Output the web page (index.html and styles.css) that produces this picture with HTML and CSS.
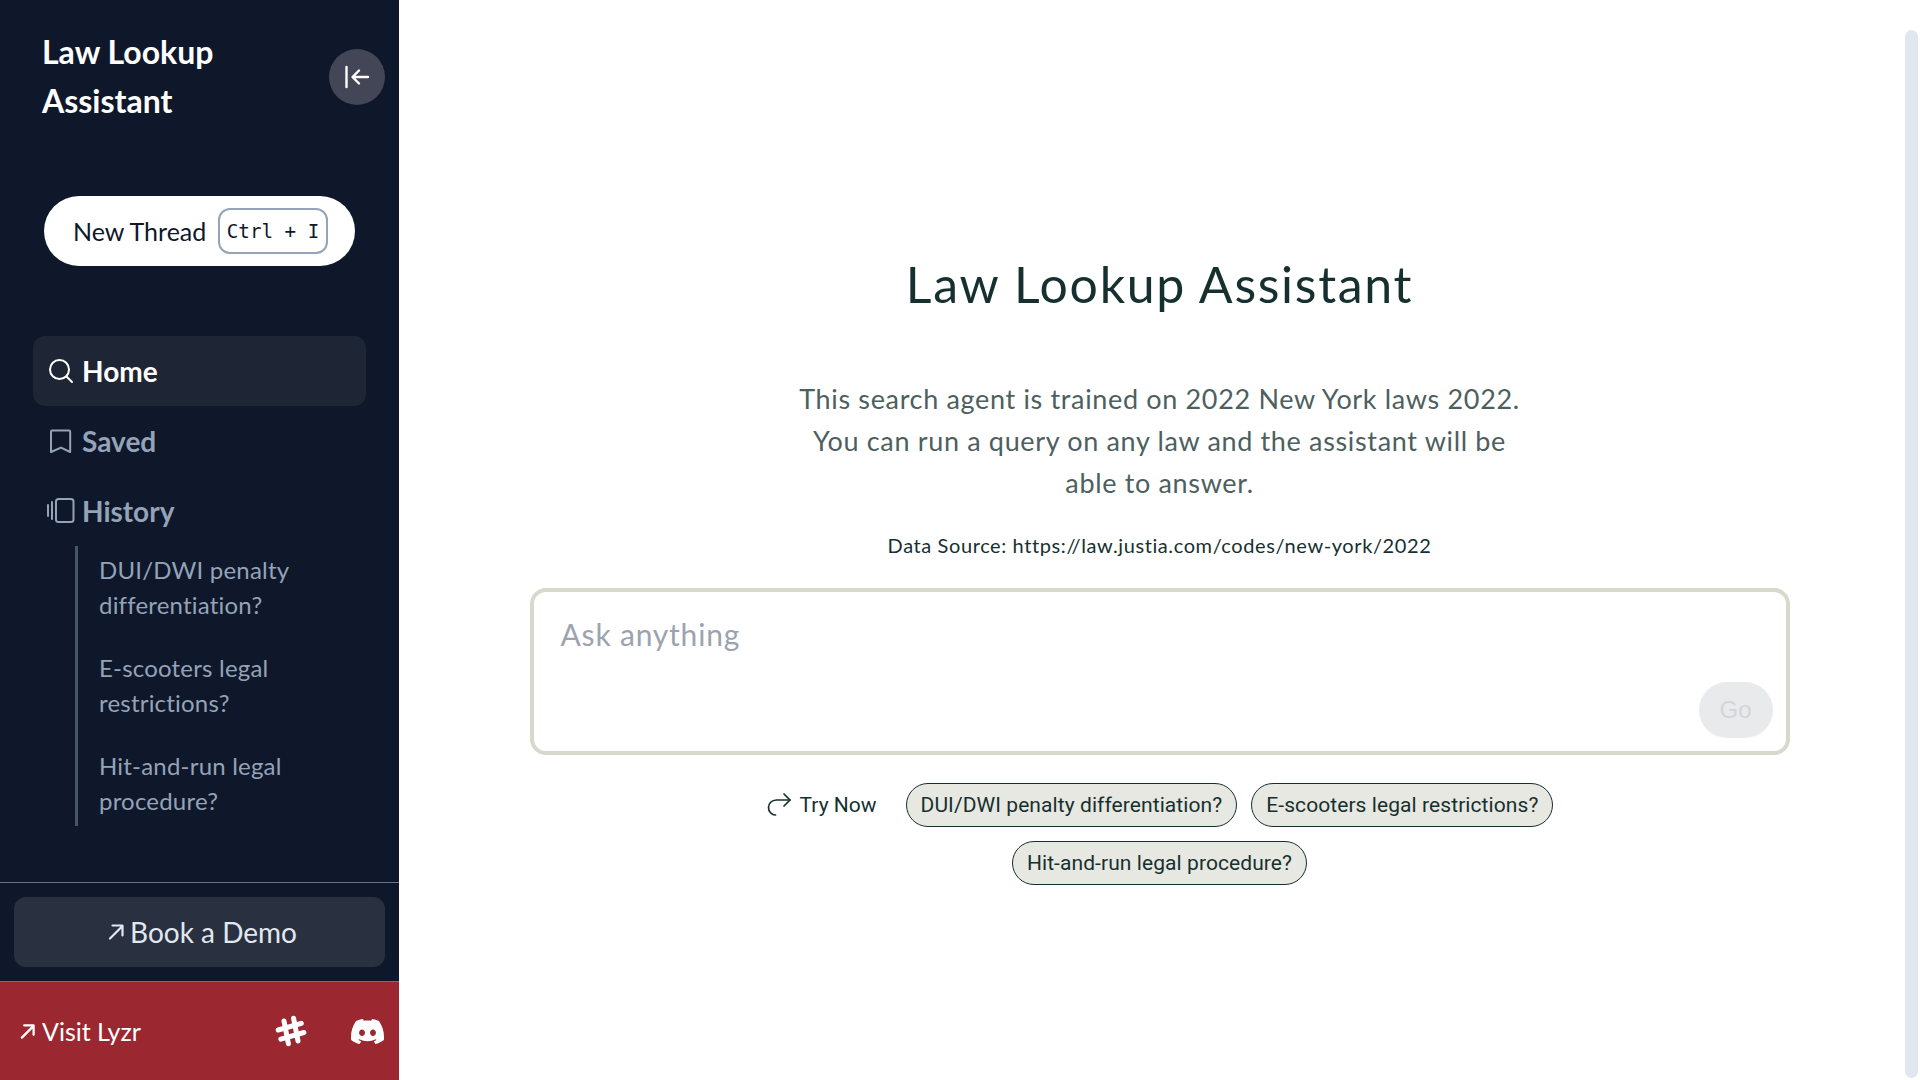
FILE: index.html
```html
<!DOCTYPE html>
<html lang="en">
<head>
<meta charset="utf-8">
<title>Law Lookup Assistant</title>
<link rel="stylesheet" href="styles.css">
</head>
<body>
<div class="app">
  <aside class="sidebar">
    <div class="brand">
      <div class="brand-title">Law Lookup Assistant</div>
      <button class="collapse"><svg width="28" height="28" viewBox="0 0 28 28" fill="none" stroke="#fff" stroke-width="2.400" stroke-linecap="round" stroke-linejoin="round"><path d="M3.500 4v20M25 14H10M16 7.500 9.500 14l6.500 6.500"/></svg></button>
    </div>
    <div class="new-row">
      <button class="new-thread"><span>New Thread</span><kbd class="kbd">Ctrl + I</kbd></button>
    </div>
    <nav class="nav">
      <div class="nav-item active"><span class="nav-icon"><svg width="26" height="26" viewBox="0 0 26 26" fill="none" stroke="currentColor" stroke-width="2" stroke-linecap="round"><circle cx="11.500" cy="11.500" r="9.500"/><path d="M18.500 18.500 24 24"/></svg></span>Home</div>
      <div class="nav-item"><span class="nav-icon"><svg width="26" height="26" viewBox="0 0 26 26" fill="none" stroke="currentColor" stroke-width="2" stroke-linejoin="round"><path d="M4 2.500h17c.8 0 1.200.4 1.200 1.200V24L13 19.600 3 24V3.700c0-.8.2-1.200 1-1.200z"/></svg></span>Saved</div>
      <div class="nav-item"><span class="nav-icon"><svg width="30" height="28" viewBox="0 0 30 28" fill="none" stroke="currentColor" stroke-width="2" stroke-linecap="round" stroke-linejoin="round"><rect x="10" y="2" width="17.500" height="23" rx="2.500"/><path d="M2 8v11M6 5v17"/></svg></span>History</div>
      <div class="history">
        <a class="history-item">DUI/DWI penalty differentiation?</a>
        <a class="history-item">E-scooters legal restrictions?</a>
        <a class="history-item">Hit-and-run legal procedure?</a>
      </div>
    </nav>
    <div class="demo-wrap">
      <button class="demo"><svg width="16" height="16" viewBox="0 0 16 16" fill="none" stroke="currentColor" stroke-width="2.200" stroke-linecap="round" stroke-linejoin="round"><path d="M2 14.500 14.500 2M4.500 1.500h10v10"/></svg>Book a Demo</button>
    </div>
    <div class="visit">
      <a class="visit-link"><svg width="15" height="15" viewBox="0 0 16 16" fill="none" stroke="currentColor" stroke-width="2.400" stroke-linecap="round" stroke-linejoin="round"><path d="M2 14.500 14.500 2M4.500 1.500h10v10"/></svg>Visit Lyzr</a>
      <div class="socials">
        <svg class="slack" width="32" height="32" viewBox="0 0 32 32" fill="none" stroke="#fff" stroke-width="5" stroke-linecap="round"><path d="M12 4.500 10 27.500M22 4.500 20 27.500M4 11.500h24M4 21h24" transform="rotate(-16 16 16)"/></svg>
        <svg class="discord" width="33" height="33" viewBox="0 0 24 24" fill="#fff"><path d="M20.317 4.3698a19.7913 19.7913 0 00-4.8851-1.5152.0741.0741 0 00-.0785.0371c-.211.3753-.4447.8648-.6083 1.2495-1.8447-.2762-3.68-.2762-5.4868 0-.1636-.3933-.4058-.8742-.6177-1.2495a.077.077 0 00-.0785-.037 19.7363 19.7363 0 00-4.8852 1.515.0699.0699 0 00-.0321.0277C.5334 9.0458-.319 13.5799.0992 18.0578a.0824.0824 0 00.0312.0561c2.0528 1.5076 4.0413 2.4228 5.9929 3.0294a.0777.0777 0 00.0842-.0276c.4616-.6304.8731-1.2952 1.226-1.9942a.076.076 0 00-.0416-.1057c-.6528-.2476-1.2743-.5495-1.8722-.8923a.077.077 0 01-.0076-.1277c.1258-.0943.2517-.1923.3718-.2914a.0743.0743 0 01.0776-.0105c3.9278 1.7933 8.18 1.7933 12.0614 0a.0739.0739 0 01.0785.0095c.1202.099.246.1981.3728.2924a.077.077 0 01-.0066.1276 12.2986 12.2986 0 01-1.8732.8914.0766.0766 0 00-.0407.1067c.3604.698.7719 1.3628 1.225 1.9932a.076.076 0 00.0842.0286c1.961-.6067 3.9495-1.5219 6.0023-3.0294a.077.077 0 00.0313-.0552c.5004-5.177-.8382-9.6739-3.5485-13.6604a.061.061 0 00-.0312-.0286zM8.02 15.3312c-1.1825 0-2.1569-1.0857-2.1569-2.419 0-1.3332.9555-2.4189 2.157-2.4189 1.2108 0 2.1757 1.0952 2.1568 2.419 0 1.3332-.9555 2.4189-2.1569 2.4189zm7.9748 0c-1.1825 0-2.1569-1.0857-2.1569-2.419 0-1.3332.9554-2.4189 2.1569-2.4189 1.2108 0 2.1757 1.0952 2.1568 2.419 0 1.3332-.946 2.4189-2.1568 2.4189Z"/></svg>
      </div>
    </div>
  </aside>
  <main class="main">
    <h1 class="heading">Law Lookup Assistant</h1>
    <p class="intro">This search agent is trained on 2022 New York laws 2022. You can run a query on any law and the assistant will be able to answer.</p>
    <p class="source">Data Source: https://law.justia.com/codes/new-york/2022</p>
    <div class="ask">
      <span class="placeholder">Ask anything</span>
      <button class="go">Go</button>
    </div>
    <div class="suggest">
      <span class="try"><svg width="26" height="26" viewBox="0 0 26 26" fill="none" stroke="#16302f" stroke-width="1.700" stroke-linecap="round" stroke-linejoin="round"><path d="M24 8H10.500C5.500 8 2.500 11.500 2.500 15.500S5.500 23 9.500 23"/><path d="M18 2l6 6-6 6"/></svg>Try Now</span>
      <button class="chip">DUI/DWI penalty differentiation?</button>
      <button class="chip">E-scooters legal restrictions?</button>
      <button class="chip">Hit-and-run legal procedure?</button>
    </div>
  </main>
  <div class="scroll-thumb"></div>
</div>
</body>
</html>
```
FILE: styles.css
```css
* { box-sizing: border-box; }
html, body { margin: 0; height: 100%; }
body { background: #fff; font-family: "Lato", "Noto Sans", sans-serif; overflow: hidden; }
button { font-family: inherit; border: 0; cursor: pointer; }
.app { display: flex; height: 1080px; position: relative; }

.sidebar { width: 399px; flex: none; background: #0f172a; display: flex; flex-direction: column; }
.brand { display: flex; justify-content: space-between; align-items: center; height: 153px; padding: 0 14px 1px 42px; }
.brand-title { width: 210px; color: #fff; font-size: 32px; line-height: 49px; font-weight: 700; }
.collapse { width: 56px; height: 56px; margin-top: 2px; border-radius: 50%; background: #424656; display: flex; align-items: center; justify-content: center; padding: 0; }
.new-row { padding: 43px 44px 0; }
.new-thread { width: 311px; height: 70px; border-radius: 35px; background: #fff; color: #0f172a; display: flex; align-items: center; padding: 0 27px 0 29px; justify-content: space-between; font-size: 25px; }
.kbd { width: 110px; height: 46px; border: 2px solid #94a3b8; border-radius: 12px; display: flex; align-items: center; justify-content: center; font-family: "DejaVu Sans Mono", monospace; font-size: 19.200px; background: #fff; }

.nav { padding: 70px 33px 0; flex: 1; }
.nav-item { height: 70px; display: flex; align-items: center; color: #94a3b8; font-size: 28px; font-weight: 700; border-radius: 12px; }
.nav-item.active { background: #1e2535; color: #fff; }
.nav-icon { width: 49px; display: flex; justify-content: center; padding-left: 7px; flex: none; }
.history { margin: 0 0 0 42px; border-left: 3px solid #475569; padding: 6px 0 0 21px; height: 280px; display: flex; flex-direction: column; gap: 28px; }
.history-item { color: #94a3b8; font-size: 24px; line-height: 35px; width: 220px; display: block; letter-spacing: 0.2px; }

.demo-wrap { border-top: 1px solid #64748b; border-bottom: 1px solid #64748b; height: 100px; padding: 14px 14px 0; }
.demo { width: 371px; height: 70px; background: #293040; border-radius: 12px; color: #e2e8f0; font-size: 28px; display: flex; align-items: center; justify-content: center; gap: 6px; padding: 0 0 0 6px; }
.visit { height: 98px; background: #9b2830; display: flex; align-items: center; justify-content: space-between; padding: 0 15px 0 20px; color: #fff; }
.visit-link { display: flex; align-items: center; gap: 7px; font-size: 25px; }
.socials { display: flex; align-items: center; gap: 44px; }

.main { flex: 1; display: flex; flex-direction: column; align-items: center; color: #16302f; }
.heading { margin: 250px 0 0; font-size: 50px; line-height: 68px; font-weight: 400; color: #16302f; letter-spacing: 1.700px; }
.intro { margin: 60px 0 0; width: 730px; text-align: center; font-size: 27px; line-height: 42px; color: #4d5f5f; letter-spacing: 0.660px; }
.source { margin: 25px 0 0; font-size: 20px; line-height: 32px; color: #16302f; letter-spacing: 0.600px; }
.ask { margin: 27px 0 0; width: 1260px; height: 167px; border: 4px solid #d8d8cc; border-radius: 16px; position: relative; padding: 24px 27px; }
.placeholder { font-size: 30px; line-height: 36px; color: #9ca3af; display: block; letter-spacing: 0.800px; }
.go { position: absolute; right: 13px; bottom: 13px; width: 74px; height: 56px; border-radius: 28px; background: #e9eaec; color: #d3d5da; font-size: 24px; padding: 0; font-family: "Liberation Sans", sans-serif; }
.suggest { margin: 28px 0 0; width: 1000px; display: flex; flex-wrap: wrap; justify-content: center; gap: 14px; align-items: center; }
.try { display: flex; align-items: center; gap: 8px; font-size: 21px; font-family: "Roboto", sans-serif; margin-right: 15px; color: #16302f; }
.chip { height: 44px; border-radius: 22px; border: 1px solid #16302f; background: #e8e8e2; color: #16302f; padding: 0 14px; font-size: 21px; font-family: "Roboto", sans-serif; letter-spacing: 0.080px; }

.scroll-thumb { position: absolute; left: 1905px; top: 30px; width: 13px; height: 1048px; border-radius: 7px; background: #e0e7f0; }
```
